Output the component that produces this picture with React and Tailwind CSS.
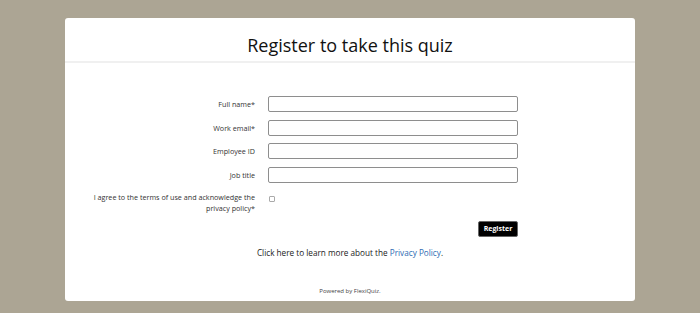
export default function App() {
  const fields = ["Full name*", "Work email*", "Employee ID", "Job title"];
  return (
    <div
      className="min-h-[313px] w-full bg-[#aca594] pt-[18px] pb-[12px]"
      style={{ fontFamily: '"Open Sans", "Noto Sans", sans-serif' }}
    >
      <div className="mx-auto w-[570px] h-[283px] rounded-[3px] bg-white flex flex-col">
        <div className="pt-[14px] pb-[3px] border-b-2 border-[#f0f0f0] text-center">
          <h1 className="text-[18px] leading-[26px] text-[#111]">Register to take this quiz</h1>
        </div>
        <div className="pl-[22px] pt-[33px] flex flex-col gap-[7.6px]">
          {fields.map((f) => (
            <div key={f} className="flex items-center gap-[13px]">
              <label className="w-[168px] text-right text-[7.2px] leading-[10px] text-[#333]">{f}</label>
              <input
                type="text"
                className="w-[250px] h-[16px] border border-[#8e8e8e] rounded-[2px] bg-white"
              />
            </div>
          ))}
        </div>
        <div className="pl-[22px] mt-[9.5px] flex items-start gap-[14px]">
          <label className="w-[168px] text-right text-[7.2px] leading-[11px] text-[#333]">
            I agree to the terms of use and acknowledge the privacy policy*
          </label>
          <span className="mt-[4px] w-[6px] h-[6px] border border-[#aaa] rounded-[1px] bg-white"></span>
        </div>
        <div className="flex justify-end pr-[117px] mt-[7px]">
          <button className="w-[40px] h-[16px] bg-black text-white text-[7px] font-bold rounded-[2px] border border-[#666] leading-[14px]">
            Register
          </button>
        </div>
        <p className="mt-[10px] text-center text-[8.2px] leading-[12px] text-[#222]">
          Click here to learn more about the <span className="text-[#2d6bb3]">Privacy Policy</span>.
        </p>
        <p className="mt-auto mb-[6px] text-center text-[6px] leading-[8px] text-[#444]">
          Powered by FlexiQuiz.
        </p>
      </div>
    </div>
  );
}
